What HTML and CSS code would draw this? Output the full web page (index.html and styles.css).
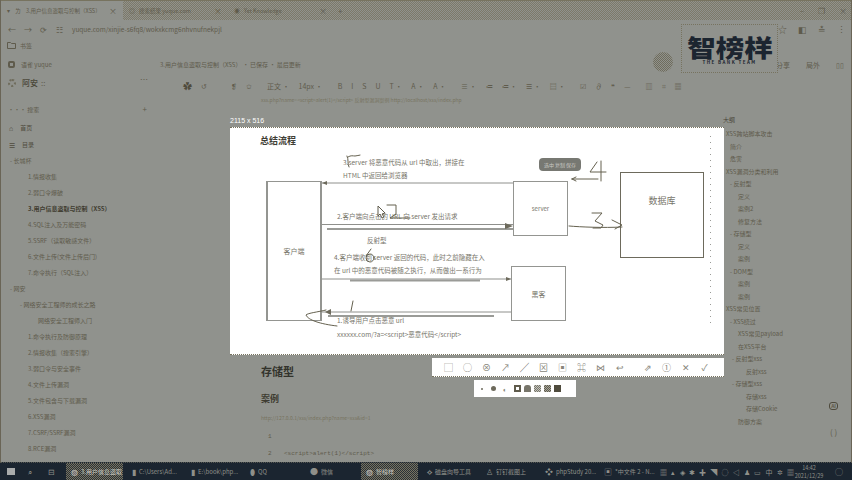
FILE: index.html
```html
<!DOCTYPE html>
<html lang="zh-CN">
<head>
    <meta charset="UTF-8">
    <title>用户信息盗取与控制</title>
    <link rel="stylesheet" href="styles.css">
</head>
<body>
<div class="screen">
    <div class="window">
        <div class="tabs">
            <div class="tab tab-active"><span class="tab-mark">▾</span><span class="tab-fav">ㄌ</span><span class="tab-text">3.用户信息盗取与控制（XSS）</span><span class="tab-x">×</span></div>
            <div class="tab"><span class="tab-fav">◎</span><span class="tab-text">搜索结果 yuque.com</span><span class="tab-x">×</span></div>
            <div class="tab"><span class="tab-fav">◉</span><span class="tab-text">Yet Knowledge</span><span class="tab-x">×</span></div>
            <span class="tab-add">+</span>
            <div class="win-btns"><span>–</span><span>❐</span><span>×</span></div>
        </div>

        <div class="address">
            <span class="nav-icon">←</span><span class="nav-icon">→</span><span class="nav-icon">⟳</span><span class="nav-icon">☷</span>
            <span class="url">yuque.com/xinjie-s6fq8/wokxkcmg6nhvnufnekpjl</span>
            <div class="addr-right"><span>☆</span><span>◧</span><span>≛</span><span>⋮</span></div>
        </div>

        <div class="bookmarks">
            <svg width="9" height="7" viewBox="0 0 9 7"><path d="M.5.5h3l1 1h4v5h-8z" fill="none" stroke="#5f5b4c"/></svg>
            <span>书签</span>
        </div>

        <div class="doc-head">
            <div class="doc-brand"><span class="brand-icon"></span><span>语雀 yuque</span></div>
            <span class="doc-path">3.用户信息盗取与控制（XSS） · 已保存 · 最后更新</span>
            <span class="avatar"></span>
            <div class="doc-actions"><span>分享</span><span>局外</span><span>▯▯</span></div>
        </div>

        <div class="workspace">
            <aside class="sidebar">
                <div class="user"><span class="user-icon"></span><b>阿安</b> ::<span class="user-more">…</span></div>
                <div class="side-search"><span>··· 搜索</span><span class="side-plus">+</span></div>
                <div class="side-link"><span class="side-ic">⌂</span>首页</div>
                <div class="side-link"><span class="side-ic">☰</span>目录</div>
                <ul class="tree">
                    <li class="lv0">- 长城杯</li>
                    <li class="lv1">1.情报收集</li>
                    <li class="lv1">2.弱口令爆破</li>
                    <li class="lv1 current">3.用户信息盗取与控制（XSS）</li>
                    <li class="lv1">4.SQL注入及万能密码</li>
                    <li class="lv1">5.SSRF（读取敏感文件）</li>
                    <li class="lv1">6.文件上传(文件上传后门)</li>
                    <li class="lv1">7.命令执行（SQL注入）</li>
                    <li class="lv0">- 网安</li>
                    <li class="lv1 dash">- 网络安全工程师的成长之路</li>
                    <li class="lv2">网络安全工程师入门</li>
                    <li class="lv1">1.命令执行及防御原理</li>
                    <li class="lv1">2.情报收集（搜索引擎）</li>
                    <li class="lv1">3.弱口令与安全事件</li>
                    <li class="lv1">4.文件上传漏洞</li>
                    <li class="lv1">5.文件包含与下载漏洞</li>
                    <li class="lv1">6.XSS漏洞</li>
                    <li class="lv1">7.CSRF/SSRF漏洞</li>
                    <li class="lv1">8.RCE漏洞</li>
                </ul>
            </aside>

            <main class="editor">
                <div class="toolbar">
                    <span class="tb-strong">✿</span><span class="tb-gap">↺</span>
                    <span>❡</span><span>✩</span><span class="tb-push">正文 ·</span><span>14px ·</span>
                    <span class="tb-push">B</span><span>I</span><span>S</span><span>U</span><span>T ·</span><span>A ·</span><span>A ·</span>
                    <span class="tb-push">≡ ·</span><span>≔</span><span>≔ ·</span><span>☰ ·</span><span>▤ ·</span>
                    <span class="tb-push">☑</span><span>∂</span><span>❝</span><span>—</span><span class="tb-push">▥</span><span>⌗</span><span>▦</span>
                </div>
                <p class="faint">xss.php?name=&lt;script&gt;alert(1)&lt;/script&gt; 反射型漏洞案例 http://localhost/xss/index.php</p>
                <div class="below">
                    <h2 class="h-store">存储型</h2>
                    <h3 class="h-case">案例</h3>
                    <p class="faint">http://127.0.0.1/xss/index.php?name=xss&amp;id=1</p>
                    <div class="code">
                        <div><span class="ln">1</span></div>
                        <div><span class="ln">2</span>&lt;script&gt;alert(1)&lt;/script&gt;</div>
                    </div>
                </div>
            </main>

            <aside class="outline">
                <div class="outline-title">大纲</div>
                <ul class="out-list">
                    <li class="o0">XSS跨站脚本攻击</li>
                    <li class="o1">简介</li>
                    <li class="o1">危害</li>
                    <li class="o0">XSS漏洞分类和利用</li>
                    <li class="o1">- 反射型</li>
                    <li class="o2">定义</li>
                    <li class="o2">案例2</li>
                    <li class="o2">修复方法</li>
                    <li class="o1">- 存储型</li>
                    <li class="o2">定义</li>
                    <li class="o2">案例</li>
                    <li class="o1">- DOM型</li>
                    <li class="o2">案例</li>
                    <li class="o2">案例</li>
                    <li class="o0">XSS常见位置</li>
                    <li class="o1">- XSS绕过</li>
                    <li class="o2">XSS常见payload</li>
                    <li class="o2">在XSS平台</li>
                    <li class="o2 sub">- 反射型xss</li>
                    <li class="o3">反射xss</li>
                    <li class="o2 sub">- 存储型xss</li>
                    <li class="o3">存储xss</li>
                    <li class="o3">存储Cookie</li>
                    <li class="o2">防御方案</li>
                </ul>
                <div class="help"><span class="help-ai">AI</span><span class="help-q">( )</span></div>
            </aside>
        </div>
    </div>

    <div class="taskbar">
        <span class="start"></span>
        <span class="task-ic">⌕</span>
        <span class="task-ic wide">⊟</span>
        <div class="task active"><span class="t-ic">◍</span>3.用户信息盗取</div>
        <div class="task"><span class="t-ic">▮</span>C:\Users\Ad...</div>
        <div class="task"><span class="t-ic">▮</span>E:\book\php...</div>
        <div class="task short"><span class="t-ic">⬮</span>QQ</div>
        <div class="task short"><span class="t-ic">●</span>微信</div>
        <div class="task active"><span class="t-ic">◍</span>智榜样</div>
        <div class="task"><span class="t-ic">⟡</span>磁盘向导工具</div>
        <div class="task"><span class="t-ic">♙</span>钉钉截图上</div>
        <div class="task"><span class="t-ic">❖</span>phpStudy 20...</div>
        <div class="task"><span class="t-ic">▣</span>*中文件 2 - N...</div>
        <div class="tray"><span>▦</span><span>▴</span><span>◈</span><span>✱</span><span>✚</span><span>◥</span><span>◌</span><span>◁</span><span>♟</span><span>▭</span><span>中</span><span>✲</span><span>▦</span></div>
        <div class="clock"><span>14:42</span><span>2021/12/29</span></div>
        <span class="notify">◯</span>
    </div>

    <div class="logo">
        <div class="logo-name">智榜样</div>
        <div class="logo-sub">THE BANK TEAM</div>
    </div>

    <div class="capture-size">2115 x 516</div>
    <section class="capture">
        <h2 class="cap-title">总结流程</h2>

        <div class="node n-client">客户端</div>
        <div class="node n-server">server</div>
        <div class="node n-db">数据库</div>
        <div class="node n-hacker">黑客</div>

        <p class="note t1">3.server 将恶意代码从 url 中取出，拼接在</p>
        <p class="note t2">HTML 中返回给浏览器</p>
        <p class="note t3">2.客户端向点击的 URL 向 server 发出请求</p>
        <p class="note t4">反射型</p>
        <p class="note t5">4.客户端收到 server 返回的代码，此时之前隐藏在入</p>
        <p class="note t6">在 url 中的恶意代码被随之执行，从而做出一系行为</p>
        <p class="note t7">1.诱导用户点击恶意 url</p>
        <p class="note t8">xxxxxx.com/?a=&lt;script&gt;恶意代码&lt;/script&gt;</p>

        <div class="tag">选中 复制 保存</div>

        <svg class="wires" width="493" height="228" viewBox="0 0 493 228" fill="none">
            <g stroke="#8f908c" stroke-width="1">
                <path d="M283 55H92"/>
                <path d="M92 96.500H283"/>
                <path d="M92 151H281"/>
                <path d="M281 184H92"/>
            </g>
            <g stroke="#9a9b97" stroke-width="2">
                <path d="M97 101H283"/>
                <path d="M120 152.500H250"/>
                <path d="M98 188H264"/>
            </g>
            <path d="M480.500 8V200" stroke="#9a9b97" stroke-dasharray="1 5"/>
            <g fill="#6d6a5c">
                <path d="M92 55l5-2v4z"/>
                <path d="M283 98l-8-3v6z"/>
                <path d="M281 151l-5-2v4z"/>
                <path d="M95 184l6-3v6z"/>
            </g>
            <g stroke="#65614f" stroke-width="1" stroke-linecap="round" stroke-linejoin="round">
                <!-- 5 -->
                <path d="M117 28c2 4 0 7 2 11M118 29c3-2 5-1 7-1 2 0 4-1 5-1"/>
                <!-- 2 -->
                <path d="M157 77h9v9l-6 4h20"/>
                <!-- 4 -->
                <path d="M367 34l-7 10h16M371 33v20M342 51h26M342 51l4-2M342 51l4 2"/>
                <!-- 3 -->
                <path d="M362 85h10l-7 8 8 4-2 3h-8"/>
                <path d="M339 98c12 1 34 2 53 1M382 92l10 5-7 4"/>
                <!-- 6 -->
                <path d="M141 121l-5 7"/>
                <circle cx="140" cy="130" r="4"/>
                <!-- 1 -->
                <path d="M123 173l-2 10"/>
                <path d="M96 182c-8 2-18 3-20 5 2 5 14 9 31 11"/>
            </g>
            <path d="M148 78v10l2-2 2 4 2-1-2-3 3-1z" fill="#fff" stroke="#5f5b4c" stroke-width="1"/>
        </svg>
    </section>

    <div class="shot-tools">
        <span>▢</span><span>◯</span><span>⊗</span><span>↗</span><span class="on">╱</span><span>⊠</span><span>▣</span><span>⌘</span><span>⋈</span><span>↩</span>
        <span class="sep">⇗</span><span>①</span><span>✕</span><span>✓</span>
    </div>
    <div class="shot-sizes">
        <span class="s-dot small"></span><span class="s-dot"></span><span class="s-arc">◖</span>
        <span class="swatch outlined"></span><span class="swatch c1"></span><span class="swatch c2"></span><span class="swatch c3"></span><span class="swatch c4"></span>
    </div>
</div>
</body>
</html>
```

FILE: styles.css
```css
* {
box-sizing: border-box;
}

html, body {
margin: 0;
padding: 0;
}

body {
background-color: #90928d;
font-family: "Noto Sans CJK SC", "Liberation Sans", sans-serif;
color: #5f5b4c;
font-size: 6px;
}

ul {
list-style: none;
margin: 0;
padding: 0;
}

p, h2, h3 {
margin: 0;
}

.screen {
position: relative;
width: 852px;
height: 480px;
overflow: hidden;
display: flex;
flex-direction: column;
background-color: #90928d;
}

.window {
flex: 1;
min-height: 0;
overflow: hidden;
display: flex;
flex-direction: column;
border-left: 1px solid #6a6556;
border-right: 1px solid #6a6556;
}

/* tabs */
.tabs {
height: 20px;
flex-shrink: 0;
display: flex;
align-items: center;
background: repeating-conic-gradient(#7d7968 0 25%, #90928d 0 50%) 0 0 / 2px 2px;
border-top: 1px solid #77735f;
}

.tab {
width: 105px;
height: 19px;
display: flex;
align-items: center;
gap: 4px;
padding: 0 6px;
white-space: nowrap;
}

.tab-active {
width: 122px;
gap: 5px;
background-color: #90928d;
}

.tab-mark {
font-size: 6px;
}

.tab-text {
flex: 1;
font-size: 5.500px;
}

.tab-x {
font-size: 8px;
}

.tab-add {
margin-left: 5px;
font-size: 8px;
}

.win-btns {
margin-left: auto;
display: flex;
gap: 14px;
padding-right: 4px;
font-size: 8px;
}

/* address */
.address {
height: 18px;
flex-shrink: 0;
display: flex;
align-items: center;
gap: 8px;
padding-left: 7px;
font-size: 8px;
}

.nav-icon {
width: 8px;
}

.url {
font-size: 6.500px;
}

.addr-right {
margin-left: auto;
display: flex;
gap: 11px;
padding-right: 5px;
font-size: 9px;
}

.bookmarks {
height: 14px;
flex-shrink: 0;
display: flex;
align-items: center;
gap: 4px;
padding-left: 6px;
}

/* doc header */
.doc-head {
height: 24px;
flex-shrink: 0;
display: flex;
align-items: center;
padding-left: 7px;
}

.doc-brand {
width: 152px;
display: flex;
align-items: center;
gap: 6px;
font-size: 6px;
}

.brand-icon {
width: 7px;
height: 7px;
border: 2px solid #5f5b4c;
border-radius: 2px;
}

.doc-path {
font-size: 6px;
}

.avatar {
margin-left: auto;
margin-right: 178px;
align-self: flex-start;
width: 20px;
height: 20px;
border-radius: 50%;
background: repeating-conic-gradient(#6f6c5c 0 25%, #90928d 0 50%) 0 0 / 2px 2px;
}

.doc-actions {
position: absolute;
right: 8px;
top: 60px;
display: flex;
gap: 16px;
font-size: 7px;
}

/* body columns */
.workspace {
flex: 1;
min-height: 0;
display: flex;
}

.sidebar {
width: 229px;
flex-shrink: 0;
}

.user {
height: 13px;
display: flex;
align-items: center;
gap: 3px;
padding-left: 7px;
font-size: 8px;
position: relative;
}

.user b {
color: #4a4739;
font-weight: 500;
margin-left: 3px;
}

.user-icon {
width: 8px;
height: 8px;
border: 2px dotted #6f6c5c;
border-radius: 50%;
}

.user-more {
position: absolute;
left: 139px;
top: -2px;
}

.side-search {
height: 30px;
padding: 16px 0 0 7px;
display: flex;
justify-content: space-between;
width: 146px;
font-size: 6px;
}

.side-plus {
font-size: 8px;
line-height: 8px;
}

.side-link {
height: 17px;
display: flex;
align-items: center;
gap: 7px;
padding-left: 8px;
color: #4f4b3d;
}

.side-ic {
font-size: 7px;
}

.tree li {
height: 16px;
line-height: 16px;
white-space: nowrap;
}

.lv0 {
padding-left: 9px;
}

.lv1 {
padding-left: 27px;
}

.lv1.dash {
padding-left: 19px;
}

.lv2 {
padding-left: 37px;
}

.current {
font-weight: 700;
color: #3f3c30;
}

/* editor */
.editor {
flex: 1;
min-width: 0;
}

.toolbar {
height: 20px;
display: flex;
align-items: center;
gap: 9px;
margin-left: -47px;
font-size: 7px;
white-space: nowrap;
}

.tb-strong {
font-size: 9px;
color: #4f4b3d;
}

.tb-gap {
margin-right: 15px;
}

.tb-push {
margin-left: 6px;
}

.faint {
font-size: 5px;
color: #77735f;
white-space: nowrap;
padding-left: 31px;
height: 10px;
line-height: 10px;
margin-top: -1px;
}

.below {
padding: 258px 0 0 31px;
}

.below .faint {
padding-left: 0;
margin-top: 7px;
}

.h-store {
font-size: 11px;
line-height: 16px;
color: #33332c;
font-weight: 700;
}

.h-case {
font-size: 9px;
line-height: 14px;
color: #3e3c31;
font-weight: 700;
margin-top: 13px;
}

.code {
margin-top: 5px;
font-family: "Liberation Mono", monospace;
font-size: 6px;
line-height: 17px;
}

.ln {
display: inline-block;
width: 23px;
padding-left: 7px;
}

/* outline */
.outline {
width: 130px;
flex-shrink: 0;
position: relative;
padding-left: 2px;
}

.outline-title {
margin-top: 37px;
height: 13px;
line-height: 13px;
color: #4a4739;
}

.out-list {
margin-top: 2px;
}

.out-list li {
height: 12.500px;
line-height: 12.500px;
white-space: nowrap;
}

.o0 {
padding-left: 3px;
}

.o1 {
padding-left: 7px;
}

.o2 {
padding-left: 15px;
}

.o2.sub {
padding-left: 9px;
}

.o3 {
padding-left: 23px;
}

.help {
position: absolute;
right: 13px;
top: 326px;
display: flex;
flex-direction: column;
align-items: center;
gap: 18px;
}

.help-ai {
font-size: 5px;
font-weight: 700;
border: 1px solid #4f4b3d;
border-radius: 3px;
padding: 0 1px;
line-height: 6px;
}

.help-q {
font-size: 8px;
line-height: 8px;
}

/* taskbar */
.taskbar {
height: 18px;
flex-shrink: 0;
display: flex;
align-items: center;
background-color: #1b2530;
color: #8f908a;
font-size: 6px;
white-space: nowrap;
border-top: 1px dotted #55564f;
}

.start {
width: 8px;
height: 7px;
margin-left: 7px;
margin-right: 13px;
background-color: #a9abab;
}

.task-ic {
width: 20px;
font-size: 8px;
}

.task-ic.wide {
width: 18px;
}

.task {
width: 59px;
height: 17px;
display: flex;
align-items: center;
gap: 3px;
padding-left: 9px;
}

.task.short {
width: 60px;
}

.task.active {
width: 57px;
padding-left: 5px;
background: repeating-conic-gradient(#77735f 0 25%, #2a3138 0 50%) 0 0 / 2px 2px;
color: #c8c8c0;
}

.t-ic {
font-size: 8px;
}

.tray {
margin-left: 6px;
display: flex;
justify-content: space-between;
font-size: 7px;
width: 134px;
}

.clock {
width: 30px;
display: flex;
flex-direction: column;
align-items: center;
font-size: 5.500px;
line-height: 8px;
}

.notify {
margin-left: 11px;
font-size: 8px;
}

/* logo over the page */
.logo {
position: absolute;
left: 681px;
top: 24px;
width: 97px;
height: 49px;
border: 1px dotted #77735f;
background-color: #90928d;
display: flex;
flex-direction: column;
align-items: center;
}

.logo-name {
font-size: 24px;
font-weight: 900;
line-height: 24px;
margin-top: 10px;
color: #1c2530;
white-space: nowrap;
transform: scaleX(1.190);
}

.logo-sub {
font-size: 4.500px;
line-height: 6px;
letter-spacing: 1.400px;
font-weight: 700;
color: #1c2530;
white-space: nowrap;
}

/* screenshot selection */
.capture-size {
position: absolute;
left: 230px;
top: 116px;
font-family: "Liberation Sans", sans-serif;
font-size: 7px;
line-height: 10px;
color: #fff;
}

.capture {
position: absolute;
left: 230px;
top: 127px;
width: 494px;
height: 228px;
background-color: #fff;
border-top: 1px dotted #77735f;
border-bottom: 1px dotted #77735f;
}

.cap-title {
position: absolute;
left: 30px;
top: 6px;
font-size: 9px;
line-height: 14px;
font-weight: 700;
color: #3f3e35;
}

.node {
position: absolute;
display: flex;
align-items: center;
justify-content: center;
background-color: #fff;
border: 1px solid #949591;
color: #77756a;
font-size: 7px;
}

.n-client {
left: 36px;
top: 53px;
width: 56px;
height: 140px;
border-left-width: 2px;
border-right-width: 2px;
}

.n-server {
left: 283px;
top: 53px;
width: 55px;
height: 55px;
font-size: 6px;
}

.n-db {
left: 390px;
top: 44px;
width: 84px;
height: 86px;
border-color: #6d6a5c;
font-size: 9px;
align-items: flex-start;
padding-top: 21px;
}

.n-hacker {
left: 281px;
top: 138px;
width: 55px;
height: 55px;
}

.note {
position: absolute;
font-size: 6.500px;
line-height: 10px;
color: #77756a;
white-space: nowrap;
}

.t1 { left: 113px; top: 29px; }
.t2 { left: 113px; top: 42px; }
.t3 { left: 107px; top: 83px; }
.t4 { left: 137px; top: 107px; }
.t5 { left: 104px; top: 124px; }
.t6 { left: 104px; top: 137px; }
.t7 { left: 107px; top: 187px; }
.t8 { left: 107px; top: 201px; }

.tag {
position: absolute;
left: 309px;
top: 30px;
width: 42px;
height: 13px;
border-radius: 4px;
background-color: #777872;
color: #c9c9c4;
font-size: 5px;
line-height: 13px;
text-align: center;
white-space: nowrap;
}

.wires {
position: absolute;
left: 0;
top: 0;
pointer-events: none;
}

.shot-tools {
position: absolute;
left: 432px;
top: 358px;
width: 292px;
height: 19px;
padding-left: 7px;
display: flex;
align-items: center;
background-color: #fff;
border-bottom: 1px dotted #77735f;
color: #87857a;
font-size: 9px;
}

.shot-tools span {
width: 19px;
text-align: center;
}

.shot-tools .on {
color: #3a392f;
}

.shot-tools .sep {
margin-left: 9px;
}

.shot-sizes {
position: absolute;
left: 474px;
top: 380px;
width: 102px;
height: 17px;
padding-left: 7px;
display: flex;
align-items: center;
gap: 3px;
background-color: #fff;
}

.s-dot {
width: 5px;
height: 5px;
border-radius: 50%;
background-color: #6d6a5c;
margin-right: 3px;
}

.s-dot.small {
width: 2px;
height: 2px;
margin-right: 5px;
}

.s-arc {
font-size: 7px;
width: 8px;
color: #87857a;
margin-right: 1px;
}

.swatch {
width: 7px;
height: 7px;
}

.outlined {
border: 2px solid #5f5b4c;
}

.c1 {
background-color: #77756a;
border-radius: 3px 3px 0 0;
}

.c2 {
background: repeating-conic-gradient(#77756a 0 25%, #c4c4bd 0 50%) 0 0 / 2px 2px;
}

.c3 {
background: repeating-conic-gradient(#5f5b4c 0 25%, #a8a79e 0 50%) 0 0 / 2px 2px;
}

.c4 {
background-color: #4f4b3d;
}
```
